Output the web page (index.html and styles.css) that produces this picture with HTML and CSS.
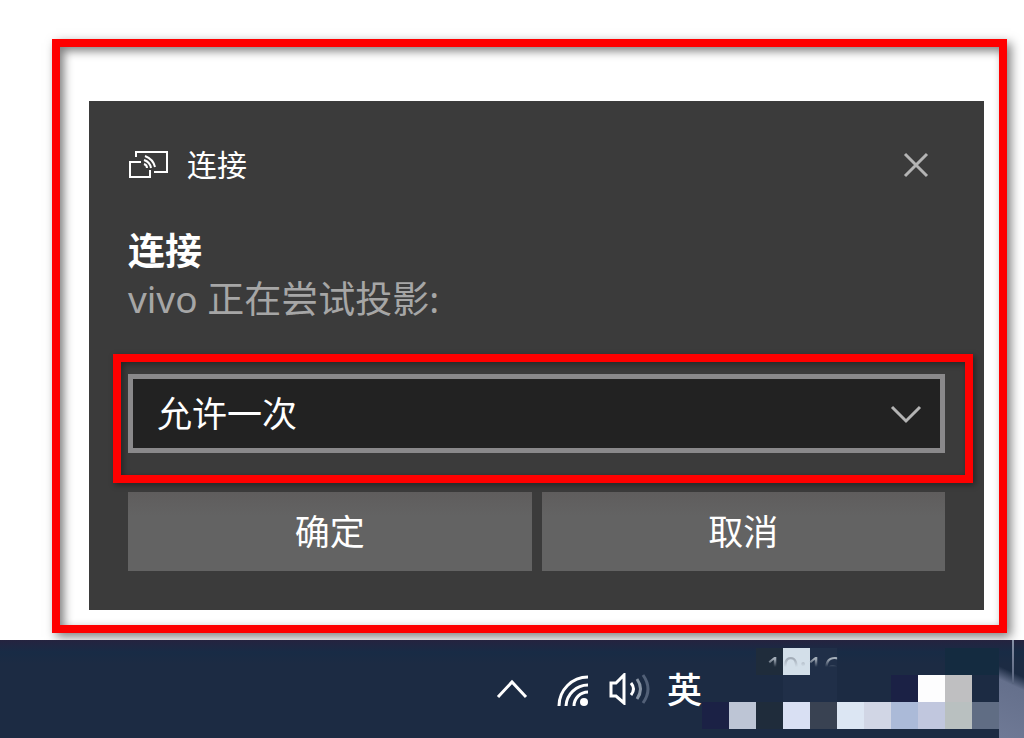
FILE: index.html
```html
<!DOCTYPE html>
<html lang="zh-CN">
<head>
  <meta charset="UTF-8" />
  <meta name="viewport" content="width=device-width, initial-scale=1" />
  <title>连接</title>
  <link rel="stylesheet" href="styles.css">
</head>
<body>
  <main class="frame">
    <section class="toast">
      <header class="toast-header">
        <svg class="cast-icon" viewBox="0 0 42 32" aria-hidden="true">
          <path d="M8 8V3H39V23H26" />
          <path d="M13 13H2V28H22V21" />
          <path class="cast-waves" d="M17 7Q25 10 27 18M16 11Q22 13 23 19M16 15Q19 16 19 19" />
        </svg>
        <span class="app-name">连接</span>
        <button class="close-btn" type="button" aria-label="关闭">
          <svg viewBox="0 0 26 26"><path d="M2 2L24 24M24 2L2 24" /></svg>
        </button>
      </header>

      <h1>连接</h1>
      <p class="message">vivo 正在尝试投影:</p>

      <div class="highlight">
        <div class="select-box">
          <select id="permission" aria-label="权限">
            <option>允许一次</option>
          </select>
          <svg class="chevron" viewBox="0 0 32 20" aria-hidden="true"><path d="M2 3L16 17L30 3" /></svg>
        </div>
      </div>

      <div class="actions">
        <button type="button">确定</button>
        <button type="button">取消</button>
      </div>
    </section>
  </main>

  <footer class="taskbar">
    <button class="tray-btn" type="button" aria-label="显示隐藏的图标">
      <svg class="up-icon" viewBox="0 0 32 20"><path d="M2 18L16 3L30 18" /></svg>
    </button>
    <button class="tray-btn" type="button" aria-label="网络">
      <svg class="wifi-icon" viewBox="0 0 32 32">
        <path d="M2 31A29 29 0 0 1 31 2M9 31A22 22 0 0 1 31 10M17 31A14 14 0 0 1 31 17" />
        <circle cx="27" cy="27" r="4" />
      </svg>
    </button>
    <button class="tray-btn" type="button" aria-label="音量">
      <svg class="volume-icon" viewBox="0 0 42 32">
        <path d="M2 10H7L15 2V30L7 23H2Z" />
        <path d="M22 10Q27 16 22 22" />
        <path class="wave-mid" d="M28 6Q35 16 28 26" />
        <path class="wave-far" d="M34 2Q44 16 34 30" />
      </svg>
    </button>
    <button class="tray-btn lang" type="button">英</button>
    <div class="clock">
      <div class="mosaic">
        <i></i><i></i><i class="c1"></i><i class="c2"></i><i class="c3"></i><i></i><i></i><i></i><i></i><i class="c4"></i><i class="c4"></i>
        <i></i><i></i><i></i><i class="c3"></i><i class="c3"></i><i></i><i></i><i class="c5"></i><i class="c6"></i><i class="c7"></i><i></i>
        <i class="c5"></i><i class="c8"></i><i class="c1"></i><i class="c9"></i><i class="c10"></i><i class="c11"></i><i class="c12"></i><i class="c13"></i><i class="c14"></i><i class="c15"></i><i class="c16"></i>
      </div>
      <time class="time">10:16</time>
    </div>
    <div class="desktop-edge"></div>
  </footer>
</body>
</html>
```

FILE: styles.css
```css
:root {
  --red: #fe0000;
  --toast: #3b3b3b;
  --button: #636363;
  --taskbar: #1c2b43;
}

* {
  box-sizing: border-box;
}

body {
  margin: 0;
  min-height: 100vh;
  display: flex;
  flex-direction: column;
  background: #fff;
  color: #fff;
  font-family: "Noto Sans", "Noto Sans CJK SC", sans-serif;
}

button, select {
  font-family: inherit;
  color: inherit;
  border: none;
  border-radius: 0;
  padding: 0;
}

svg {
  display: block;
  fill: none;
  stroke: #fff;
  stroke-width: 3;
}

.frame {
  margin: 39px 17px 7px 52px;
  padding: 54px 15px 15px 29px;
  border: 8px solid var(--red);
  box-shadow: 4px 4px 10px rgba(0, 0, 0, 0.5), inset 4px 4px 10px rgba(0, 0, 0, 0.5);
}

.toast {
  background: var(--toast);
  padding: 44px 39px 39px;
}

.toast-header {
  display: flex;
  align-items: center;
  height: 40px;
}

.cast-icon {
  width: 42px;
  height: 32px;
  stroke-width: 2;
}

.app-name {
  margin-left: 17px;
  font-size: 30px;
  line-height: 40px;
}

.close-btn {
  margin-left: auto;
  margin-right: 16px;
  background: none;
}

.close-btn svg {
  width: 26px;
  height: 26px;
  stroke: #b4b4b4;
}

h1 {
  margin: 42px 0 0;
  font-size: 37px;
  line-height: 48px;
  font-weight: 700;
}

.message {
  margin: 0;
  font-size: 37px;
  line-height: 48px;
  color: #a6a6a6;
}

.highlight {
  margin: 31px -28px 9px -15px;
  padding: 12px 20px 22px 7px;
  border: 8px solid var(--red);
  box-shadow: 2px 2px 6px rgba(0, 0, 0, 0.4), inset 2px 2px 6px rgba(0, 0, 0, 0.4);
}

.select-box {
  display: grid;
  align-items: center;
}

.select-box > * {
  grid-area: 1 / 1;
}

select {
  appearance: none;
  width: 100%;
  height: 79px;
  padding: 0 80px 0 24px;
  background: #222;
  border: 5px solid #8a898b;
  font-size: 35px;
}

.chevron {
  justify-self: end;
  margin-right: 23px;
  width: 32px;
  height: 20px;
  stroke: #b4b4b4;
  pointer-events: none;
}

.actions {
  display: grid;
  grid-template-columns: 1fr 1fr;
  gap: 10px;
}

.actions button {
  height: 79px;
  padding-bottom: 4px;
  background: linear-gradient(#5f5d5d, var(--button) 24px);
  font-size: 35px;
}

.taskbar {
  flex: 1;
  min-height: 98px;
  display: flex;
  justify-content: flex-end;
  align-items: flex-start;
  background: linear-gradient(#25233f, #182b45 12px, var(--taskbar) 24px);
}

.tray-btn {
  display: flex;
  align-items: center;
  height: 98px;
  background: none;
}

.up-icon {
  width: 32px;
  height: 20px;
}

.wifi-icon {
  margin: 4px 20px 0 29px;
  width: 32px;
  height: 32px;
}

.wifi-icon circle {
  fill: #fff;
  stroke: none;
}

.volume-icon {
  margin-right: 16px;
  width: 42px;
  height: 32px;
}

.wave-mid {
  stroke: #8995a5;
}

.wave-far {
  stroke: #526077;
}

.lang {
  padding-bottom: 4px;
  font-size: 35px;
  font-weight: 500;
}

.clock {
  position: relative;
  padding-top: 8px;
}

.mosaic {
  display: grid;
  grid-template-columns: repeat(11, 27px);
  grid-auto-rows: 27px;
}

/* only the top of the digits shows, the rest fades out */
.time {
  position: absolute;
  top: 7px;
  left: 64px;
  font-size: 29px;
  line-height: 40px;
  color: transparent;
  background: linear-gradient(#a3adb8 12px, transparent 20px);
  background-clip: text;
}

.c1 { background: #1f2c3b; }
.c2 { background: #d3dfe9; }
.c3 { background: #202f48; }
.c4 { background: #142b40; }
.c5 { background: #1b2145; }
.c6 { background: #fdfdfe; }
.c7 { background: #bfbfc1; }
.c8 { background: #bdc5d5; }
.c9 { background: #d9e0f3; }
.c10 { background: #394252; }
.c11 { background: #dce6f3; }
.c12 { background: #d1d6e5; }
.c13 { background: #abbad8; }
.c14 { background: #c1c7de; }
.c15 { background: #b9c0c0; }
.c16 { background: #606d84; }

.desktop-edge {
  align-self: stretch;
  width: 25px;
  background:
    linear-gradient(#8790a6, #56627c) 13px 0 / 2px 44px no-repeat,
    linear-gradient(205deg, transparent 14px, #65708c 26px, #737d99) 0 22px / 25px 100% no-repeat;
}
```
